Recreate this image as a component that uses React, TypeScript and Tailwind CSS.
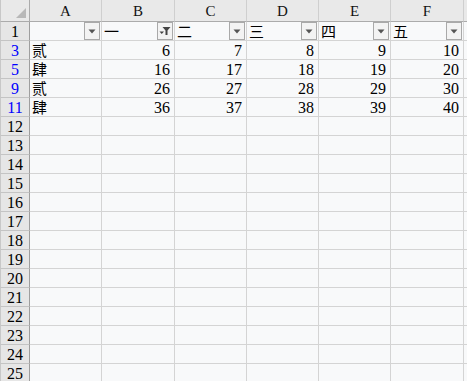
import React from "react";

const colW = ["w-[72px]", "w-[73px]", "w-[72px]", "w-[72px]", "w-[72px]", "w-[73px]"];
const letters = ["A", "B", "C", "D", "E", "F"];

type Row = { n: string; blue?: boolean; cells: string[]; filter?: boolean };

const rows: Row[] = [
  { n: "1", cells: ["", "一", "二", "三", "四", "五"], filter: true },
  { n: "3", blue: true, cells: ["贰", "6", "7", "8", "9", "10"] },
  { n: "5", blue: true, cells: ["肆", "16", "17", "18", "19", "20"] },
  { n: "9", blue: true, cells: ["贰", "26", "27", "28", "29", "30"] },
  { n: "11", blue: true, cells: ["肆", "36", "37", "38", "39", "40"] },
  ...Array.from({ length: 14 }, (_, i) => ({ n: String(12 + i), cells: ["", "", "", "", "", ""] })),
];

const serif = "font-[family-name:'Liberation_Serif',serif]";
const cjk = "font-[family-name:'Noto_Sans_CJK_SC','Noto_Sans',sans-serif]";

function DropBtn({ active }: { active?: boolean }) {
  return (
    <div className="absolute right-[1px] top-0 w-[16px] h-[18px] border border-[#a9a9a9] bg-[#f3f3f3] flex items-center justify-center">
      {active ? (
        <svg width="12" height="10" viewBox="0 0 12 10">
          <path d="M3.5 1 H11.5 L8.5 4.5 V9 H6.5 V4.5 Z" fill="#444" />
          <path d="M0.5 5.5 H5 L2.75 8 Z" fill="#444" />
        </svg>
      ) : (
        <svg width="8" height="5" viewBox="0 0 8 5">
          <path d="M0.5 0.5 H7.5 L4 4.5 Z" fill="#555" />
        </svg>
      )}
    </div>
  );
}

export default function App() {
  return (
    <div className="w-[467px] h-[381px] overflow-hidden bg-[#f8f9fa] select-none">
      <div className="flex h-[22px]">
        <div className="relative w-[30px] shrink-0 h-full bg-[#e9e9e9] border-r border-b border-[#ababab] border-l border-l-[#c8c8c8]">
          <svg className="absolute right-[3px] bottom-[3px]" width="10" height="10" viewBox="0 0 10 10">
            <path d="M10 0 V10 H0 Z" fill="#b8b8b8" />
          </svg>
        </div>
        {letters.map((l, i) => (
          <div
            key={l}
            className={`${colW[i]} shrink-0 h-full bg-[#e9e9e9] border-r border-r-[#cfcfcf] border-b border-b-[#ababab] flex items-end justify-center pb-[1px] text-[15px] leading-[18px] text-[#111] ${serif}`}
          >
            {l}
          </div>
        ))}
        <div className="flex-1 h-full bg-[#e9e9e9] border-b border-b-[#ababab]" />
      </div>
      {rows.map((r) => (
        <div key={r.n} className="flex h-[19px]">
          <div
            className={`w-[30px] shrink-0 h-full bg-[#e6e6e6] border-r border-r-[#9e9e9e] border-b border-b-[#c4c4c4] border-l border-l-[#c8c8c8] flex items-end justify-center text-[16px] leading-[17px] ${serif} ${
              r.blue ? "text-[#0000ff]" : "text-black"
            }`}
          >
            {r.n}
          </div>
          {r.cells.map((c, i) => {
            const isNum = /^[0-9]+$/.test(c);
            return (
              <div
                key={i}
                className={`relative ${colW[i]} shrink-0 h-full border-r border-b border-[#d4d4d4] flex items-end ${
                  isNum ? `justify-end pr-[4px] text-[16px] leading-[17px] ${serif}` : `justify-start pl-[2px] text-[15px] leading-[18px] ${cjk}`
                } text-black`}
              >
                {c}
                {r.filter && <DropBtn active={i === 1} />}
              </div>
            );
          })}
          <div className="flex-1 h-full border-b border-[#d4d4d4]" />
        </div>
      ))}
    </div>
  );
}
